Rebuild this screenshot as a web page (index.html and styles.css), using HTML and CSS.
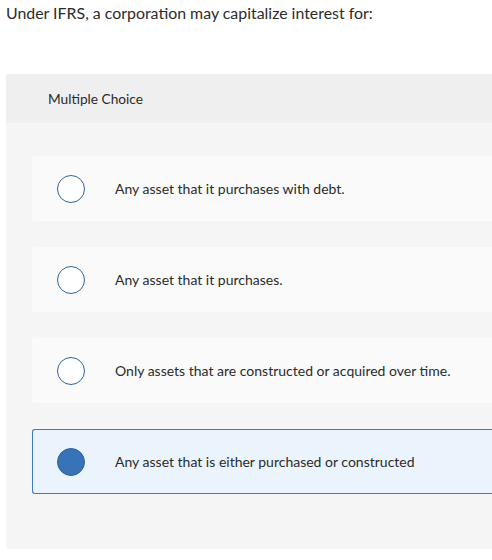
FILE: index.html
```html
<!DOCTYPE html>
<html>
<head>
<meta charset="utf-8">
<link rel="stylesheet" href="styles.css">
</head>
<body>
<p class="question">Under IFRS, a corporation may capitalize interest for:</p>
<div class="panel">
  <div class="panel-head">Multiple Choice</div>
  <div class="options">
    <div class="option"><span class="radio"></span><span class="label">Any asset that it purchases with debt.</span></div>
    <div class="option"><span class="radio"></span><span class="label">Any asset that it purchases.</span></div>
    <div class="option"><span class="radio"></span><span class="label">Only assets that are constructed or acquired over time.</span></div>
    <div class="option selected"><span class="radio"></span><span class="label">Any asset that is either purchased or constructed</span></div>
  </div>
</div>
</body>
</html>
```
FILE: styles.css
```css
html, body {
  margin: 0;
  padding: 0;
  background: #ffffff;
}
body {
  font-family: Lato, "Open Sans", "Liberation Sans", sans-serif;
  color: #222222;
  width: 492px;
  overflow: hidden;
}
.question {
  margin: 0;
  padding: 3px 0 0 6px;
  font-size: 15.9px;
  line-height: 20px;
  height: 74px;
  box-sizing: border-box;
  color: #2b2b2b;
}
.panel {
  margin-left: 6px;
  width: 500px;
  background: #f5f5f5;
  border-radius: 3px 0 0 3px;
  overflow: hidden;
  padding-bottom: 55px;
}
.panel-head {
  background: #efefef;
  height: 49px;
  box-sizing: border-box;
  padding-left: 42px;
  display: flex;
  align-items: center;
  font-size: 13.7px;
  color: #2b2b2b;
}
.options {
  padding: 33px 0 0 26px;
  display: flex;
  flex-direction: column;
  gap: 26px;
}
.option {
  height: 65px;
  box-sizing: border-box;
  background: #fafafa;
  border: 1px solid transparent;
  border-right: none;
  border-radius: 3px 0 0 3px;
  display: flex;
  align-items: center;
  padding-left: 24px;
}
.option.selected {
  background: #ebf3fc;
  border-color: #3d7ac3;
}
.radio {
  width: 28px;
  height: 28px;
  box-sizing: border-box;
  border-radius: 50%;
  border: 1.5px solid #2f6395;
  background: #fff;
  flex: none;
}
.selected .radio {
  background: #3873b8;
  border-color: #2f6395;
}
.label {
  margin-left: 30px;
  font-size: 14px;
  color: #2b2b2b;
}
```
